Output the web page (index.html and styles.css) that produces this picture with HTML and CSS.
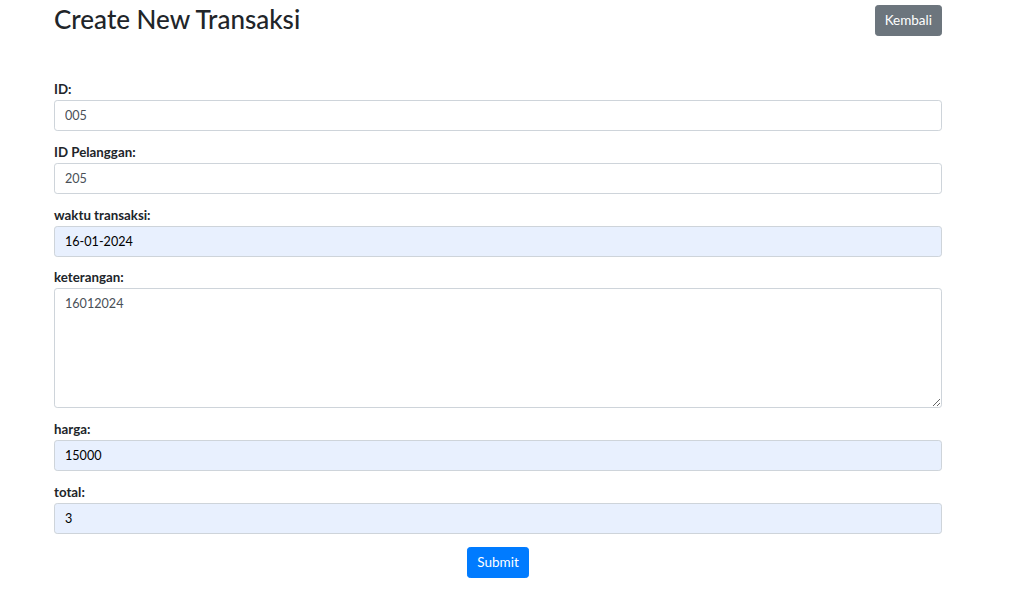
FILE: index.html
```html
<!DOCTYPE html>
<html lang="id">
<head>
<meta charset="utf-8">
<title>Create New Transaksi</title>
<link rel="stylesheet" href="styles.css">
</head>
<body>
<div class="page">
  <div class="header">
    <h3 class="title">Create New Transaksi</h3>
    <a class="btn btn-secondary" href="#">Kembali</a>
  </div>
  <form class="form">
    <div class="group">
      <label class="label" for="id">ID:</label>
      <input class="control" id="id" type="text" value="005">
    </div>
    <div class="group">
      <label class="label" for="pel">ID Pelanggan:</label>
      <input class="control" id="pel" type="text" value="205">
    </div>
    <div class="group">
      <label class="label" for="waktu">waktu transaksi:</label>
      <input class="control filled" id="waktu" type="text" value="16-01-2024">
    </div>
    <div class="group">
      <label class="label" for="ket">keterangan:</label>
      <textarea class="control area" id="ket">16012024</textarea>
    </div>
    <div class="group">
      <label class="label" for="harga">harga:</label>
      <input class="control filled" id="harga" type="text" value="15000">
    </div>
    <div class="group">
      <label class="label" for="total">total:</label>
      <input class="control filled" id="total" type="text" value="3">
    </div>
    <div class="actions">
      <button class="btn btn-primary" type="button">Submit</button>
    </div>
  </form>
</div>
</body>
</html>
```
FILE: styles.css
```css
* { box-sizing: border-box; }
html, body { margin: 0; padding: 0; background: #fff; }
body {
  font-family: Lato, "Noto Sans", "Liberation Sans", sans-serif;
  font-size: 14px;
  line-height: 1.5;
  color: #212529;
}
.page {
  width: 888px;
  margin-left: 54px;
  padding-top: 5px;
}
.header {
  display: flex;
  justify-content: space-between;
  align-items: flex-start;
}
.title {
  margin: -1px 0 0 0;
  font-size: 26px;
  font-weight: 500;
  line-height: 1.2;
  color: #212529;
}
.btn {
  display: inline-block;
  height: 31px;
  font-family: inherit;
  font-size: 13.5px;
  line-height: 21px;
  padding: 4px 9px;
  border: 1px solid transparent;
  border-radius: 3.2px;
  color: #fff;
  text-decoration: none;
  cursor: pointer;
}
.btn-secondary { background: #6c757d; border-color: #6c757d; }
.btn-primary { background: #007bff; border-color: #007bff; }
.form { margin-top: 43px; }
.group {
  display: flex;
  flex-direction: column;
  margin-bottom: 10.75px;
}
.label {
  font-size: 13.3px;
  font-weight: 700;
  line-height: 21px;
  color: #212529;
}
.control {
  display: block;
  width: 100%;
  height: 31px;
  padding: 4px 10px;
  font-family: inherit;
  font-size: 12.6px;
  line-height: 21px;
  color: #495057;
  background: #fff;
  border: 1px solid #ced4da;
  border-radius: 3.2px;
}
.filled {
  background: #e8f0fe;
  color: #000;
}
.area {
  height: 120px;
  resize: vertical;
}
.actions {
  display: flex;
  justify-content: center;
  padding-top: 2px;
}
```
